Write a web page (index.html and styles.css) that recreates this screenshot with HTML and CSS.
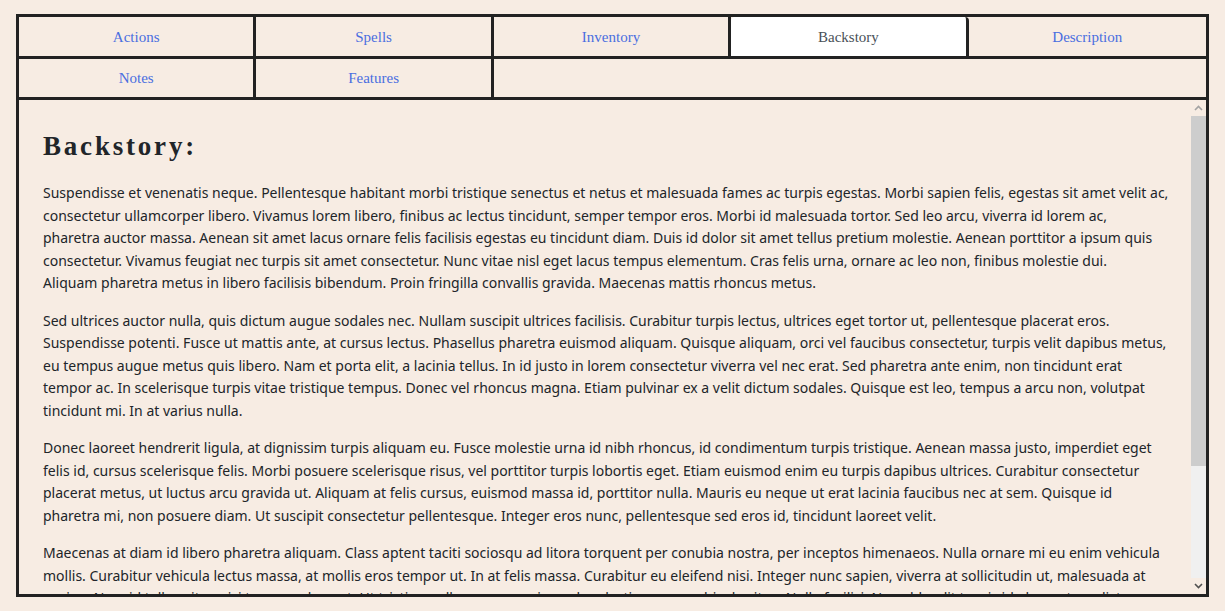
FILE: index.html
```html
<!DOCTYPE html>
<html lang="en">
<head>
<meta charset="utf-8">
<title>Backstory</title>
<link rel="stylesheet" href="styles.css">
</head>
<body>
<div class="sheet">
  <nav class="tabs">
    <a class="tab" href="#">Actions</a>
    <a class="tab" href="#">Spells</a>
    <a class="tab" href="#">Inventory</a>
    <a class="tab active" href="#">Backstory</a>
    <a class="tab" href="#">Description</a>
    <a class="tab" href="#">Notes</a>
    <a class="tab" href="#">Features</a>
  </nav>
  <section class="panel">
    <div class="content">
      <h2 class="title">Backstory:</h2>
      <p>Suspendisse et venenatis neque. Pellentesque habitant morbi tristique senectus et netus et malesuada fames ac turpis egestas. Morbi sapien felis, egestas sit amet velit ac,<br>
      consectetur ullamcorper libero. Vivamus lorem libero, finibus ac lectus tincidunt, semper tempor eros. Morbi id malesuada tortor. Sed leo arcu, viverra id lorem ac,<br>
      pharetra auctor massa. Aenean sit amet lacus ornare felis facilisis egestas eu tincidunt diam. Duis id dolor sit amet tellus pretium molestie. Aenean porttitor a ipsum quis<br>
      consectetur. Vivamus feugiat nec turpis sit amet consectetur. Nunc vitae nisl eget lacus tempus elementum. Cras felis urna, ornare ac leo non, finibus molestie dui.<br>
      Aliquam pharetra metus in libero facilisis bibendum. Proin fringilla convallis gravida. Maecenas mattis rhoncus metus.</p>
      <p>Sed ultrices auctor nulla, quis dictum augue sodales nec. Nullam suscipit ultrices facilisis. Curabitur turpis lectus, ultrices eget tortor ut, pellentesque placerat eros.<br>
      Suspendisse potenti. Fusce ut mattis ante, at cursus lectus. Phasellus pharetra euismod aliquam. Quisque aliquam, orci vel faucibus consectetur, turpis velit dapibus metus,<br>
      eu tempus augue metus quis libero. Nam et porta elit, a lacinia tellus. In id justo in lorem consectetur viverra vel nec erat. Sed pharetra ante enim, non tincidunt erat<br>
      tempor ac. In scelerisque turpis vitae tristique tempus. Donec vel rhoncus magna. Etiam pulvinar ex a velit dictum sodales. Quisque est leo, tempus a arcu non, volutpat<br>
      tincidunt mi. In at varius nulla.</p>
      <p>Donec laoreet hendrerit ligula, at dignissim turpis aliquam eu. Fusce molestie urna id nibh rhoncus, id condimentum turpis tristique. Aenean massa justo, imperdiet eget<br>
      felis id, cursus scelerisque felis. Morbi posuere scelerisque risus, vel porttitor turpis lobortis eget. Etiam euismod enim eu turpis dapibus ultrices. Curabitur consectetur<br>
      placerat metus, ut luctus arcu gravida ut. Aliquam at felis cursus, euismod massa id, porttitor nulla. Mauris eu neque ut erat lacinia faucibus nec at sem. Quisque id<br>
      pharetra mi, non posuere diam. Ut suscipit consectetur pellentesque. Integer eros nunc, pellentesque sed eros id, tincidunt laoreet velit.</p>
      <p>Maecenas at diam id libero pharetra aliquam. Class aptent taciti sociosqu ad litora torquent per conubia nostra, per inceptos himenaeos. Nulla ornare mi eu enim vehicula<br>
      mollis. Curabitur vehicula lectus massa, at mollis eros tempor ut. In at felis massa. Curabitur eu eleifend nisi. Integer nunc sapien, viverra at sollicitudin ut, malesuada at<br>
      sapien. Nam id tellus vitae nisi tempus placerat. Ut tristique ullamcorper enim, vel molestie neque vehicula vitae. Nulla facilisi. Nunc blandit turpis id elementum dictum.</p>
    </div>
    <div class="scrollbar" aria-hidden="true">
      <div class="sb-btn">
        <svg width="9" height="6" viewBox="0 0 9 6"><path d="M1 5 L4.5 1.5 L8 5" fill="none" stroke="#a3a3a3" stroke-width="1.6"/></svg>
      </div>
      <div class="sb-thumb"></div>
      <div class="sb-track"></div>
      <div class="sb-btn">
        <svg width="9" height="6" viewBox="0 0 9 6"><path d="M1 1 L4.5 4.5 L8 1" fill="none" stroke="#505050" stroke-width="1.6"/></svg>
      </div>
    </div>
  </section>
</div>
</body>
</html>
```
FILE: styles.css
```css
* { box-sizing: border-box; }

html, body { height: 100%; }

body {
  margin: 0;
  padding: 14px 16px;
  background: #f7ece3;
  color: #212529;
  font-family: "Noto Sans", "Open Sans", sans-serif;
}

.sheet {
  height: 100%;
  display: flex;
  flex-direction: column;
  border: 3px solid #222;
}

.tabs {
  display: grid;
  grid-template-columns: repeat(5, 1fr);
  border-bottom: 3px solid #222;
}

.tab {
  display: flex;
  align-items: center;
  justify-content: center;
  height: 38px;
  border-right: 3px solid #222;
  font-family: "Liberation Serif", "Times New Roman", serif;
  font-size: 15px;
  color: #4a6ee0;
  text-decoration: none;
}

.tab:nth-child(-n+5) {
  height: 42px;
  padding-top: 2px;
  border-bottom: 3px solid #222;
}

.tab:nth-child(5) { border-right: 0; }

.tab.active {
  background: #fff;
  color: #495057;
  border-radius: 4px 4px 0 0;
}

.panel {
  flex: 1;
  min-height: 0;
  display: flex;
}

.content {
  flex: 1;
  min-width: 0;
  overflow: hidden;
  padding: 30px 16px 0 24px;
}

.title {
  margin: 0 0 20px;
  font-family: "Liberation Serif", "Times New Roman", serif;
  font-weight: bold;
  font-size: 27px;
  line-height: 1.2;
  letter-spacing: 2.8px;
}

.content p {
  margin: 0 0 15px;
  font-size: 14px;
  line-height: 22.5px;
}

.scrollbar {
  width: 15px;
  flex: none;
  display: flex;
  flex-direction: column;
}

.sb-btn {
  height: 16px;
  flex: none;
  display: flex;
  align-items: center;
  justify-content: center;
  background: #f7ece3;
}

.sb-thumb {
  height: 350px;
  flex: none;
  background: #cdcdcd;
}

.sb-track {
  flex: 1;
  background: #f0f0f0;
}
```
